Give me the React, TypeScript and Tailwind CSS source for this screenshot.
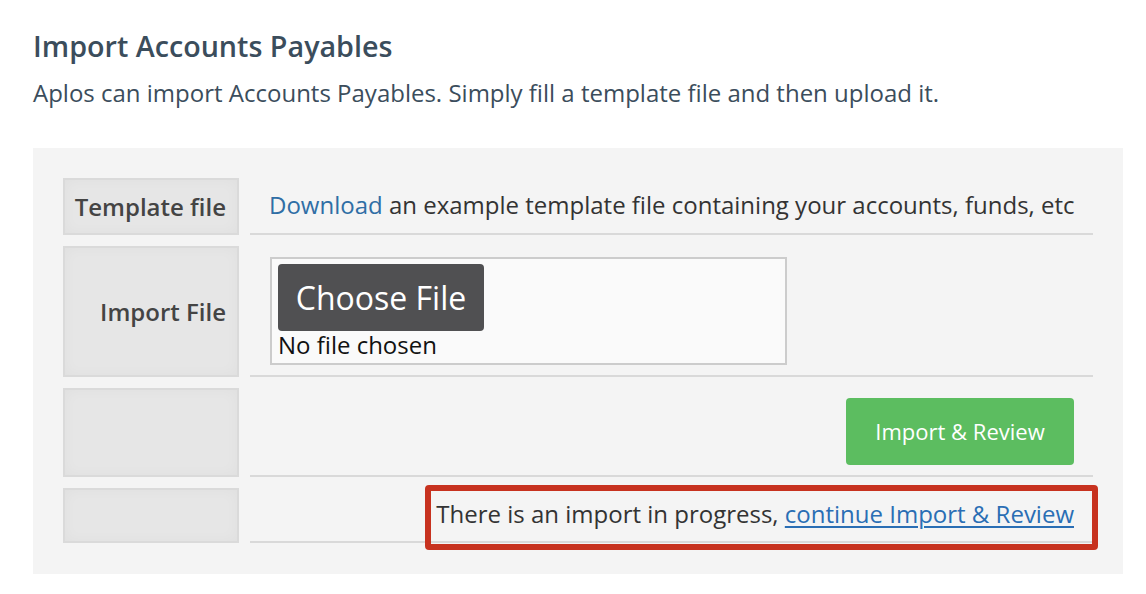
import React from 'react'

const font = {fontFamily: '"Open Sans", "Noto Sans", sans-serif'}

function Label({children, className = ''}: {children?: React.ReactNode; className?: string}) {
  return (
    <div
      className={`flex items-center justify-end pr-[11px] bg-[#e6e6e6] border-2 border-[#dadada] shadow-[inset_0_0_14px_rgba(0,0,0,0.03)] text-[24px] font-semibold text-[#444] ${className}`}
    >
      {children}
    </div>
  )
}

export default function App() {
  return (
    <div className="w-[1146px] h-[594px] bg-white pl-[33px] pt-[28px]" style={font}>
      <h1 className="text-[28.7px] font-semibold text-[#3b4d5c] leading-[36px]">Import Accounts Payables</h1>
      <p className="mt-[13px] text-[24px] text-[#3b4d5c] leading-[32px]">
        Aplos can import Accounts Payables. Simply fill a template file and then upload it.
      </p>

      <div className="mt-[39px] w-[1090px] bg-[#f4f4f4] p-[30px] pb-[31px]">
        <div className="grid grid-cols-[176px_1fr] gap-x-[11px] gap-y-[11px]">
          {/* Template file */}
          <Label className="h-[57px]">Template file</Label>
          <div className="h-[57px] border-b-2 border-[#d9d9d9] flex items-center pl-[19px] pb-[2px] text-[24px] text-[#333]">
            <span>
              <a className="text-[#2f6ea5]">Download</a> an example template file containing your accounts, funds, etc
            </span>
          </div>

          {/* Import file */}
          <Label className="h-[131px]">Import File</Label>
          <div className="h-[131px] border-b-2 border-[#d9d9d9] pl-[20px] pt-[11px]">
            <div className="w-[517px] h-[108px] bg-[#fafafa] border-2 border-[#cccccc] px-[6px] pt-[5px]">
              <button className="w-[206px] h-[67px] rounded-[4px] bg-[#505052] text-white text-[32px] leading-none">
                Choose File
              </button>
              <div className="text-[24px] text-[#111] leading-[28px]">No file chosen</div>
            </div>
          </div>

          {/* Import & Review */}
          <Label className="h-[89px]" />
          <div className="h-[89px] border-b-2 border-[#d9d9d9] flex justify-end items-start pt-[10px] pr-[19px]">
            <button className="w-[228px] h-[67px] rounded-[4px] bg-[#5cbd60] text-white text-[22px]">
              Import &amp; Review
            </button>
          </div>

          {/* Progress notice */}
          <Label className="h-[55px]" />
          <div className="relative h-[55px] border-b-2 border-[#d9d9d9] flex items-center justify-end pr-[19px] pb-[1px] text-[24px] text-[#333]">
            <span>
              There is an import in progress,{' '}
              <a className="text-[#2a6eb4] underline underline-offset-[3px] decoration-[1.5px]">continue Import &amp; Review</a>
            </span>
            <div className="absolute left-[175px] right-[-5px] top-[-3px] h-[65px] border-[6px] border-[#c7321f] rounded-[4px] pointer-events-none" />
          </div>
        </div>
      </div>
    </div>
  )
}
